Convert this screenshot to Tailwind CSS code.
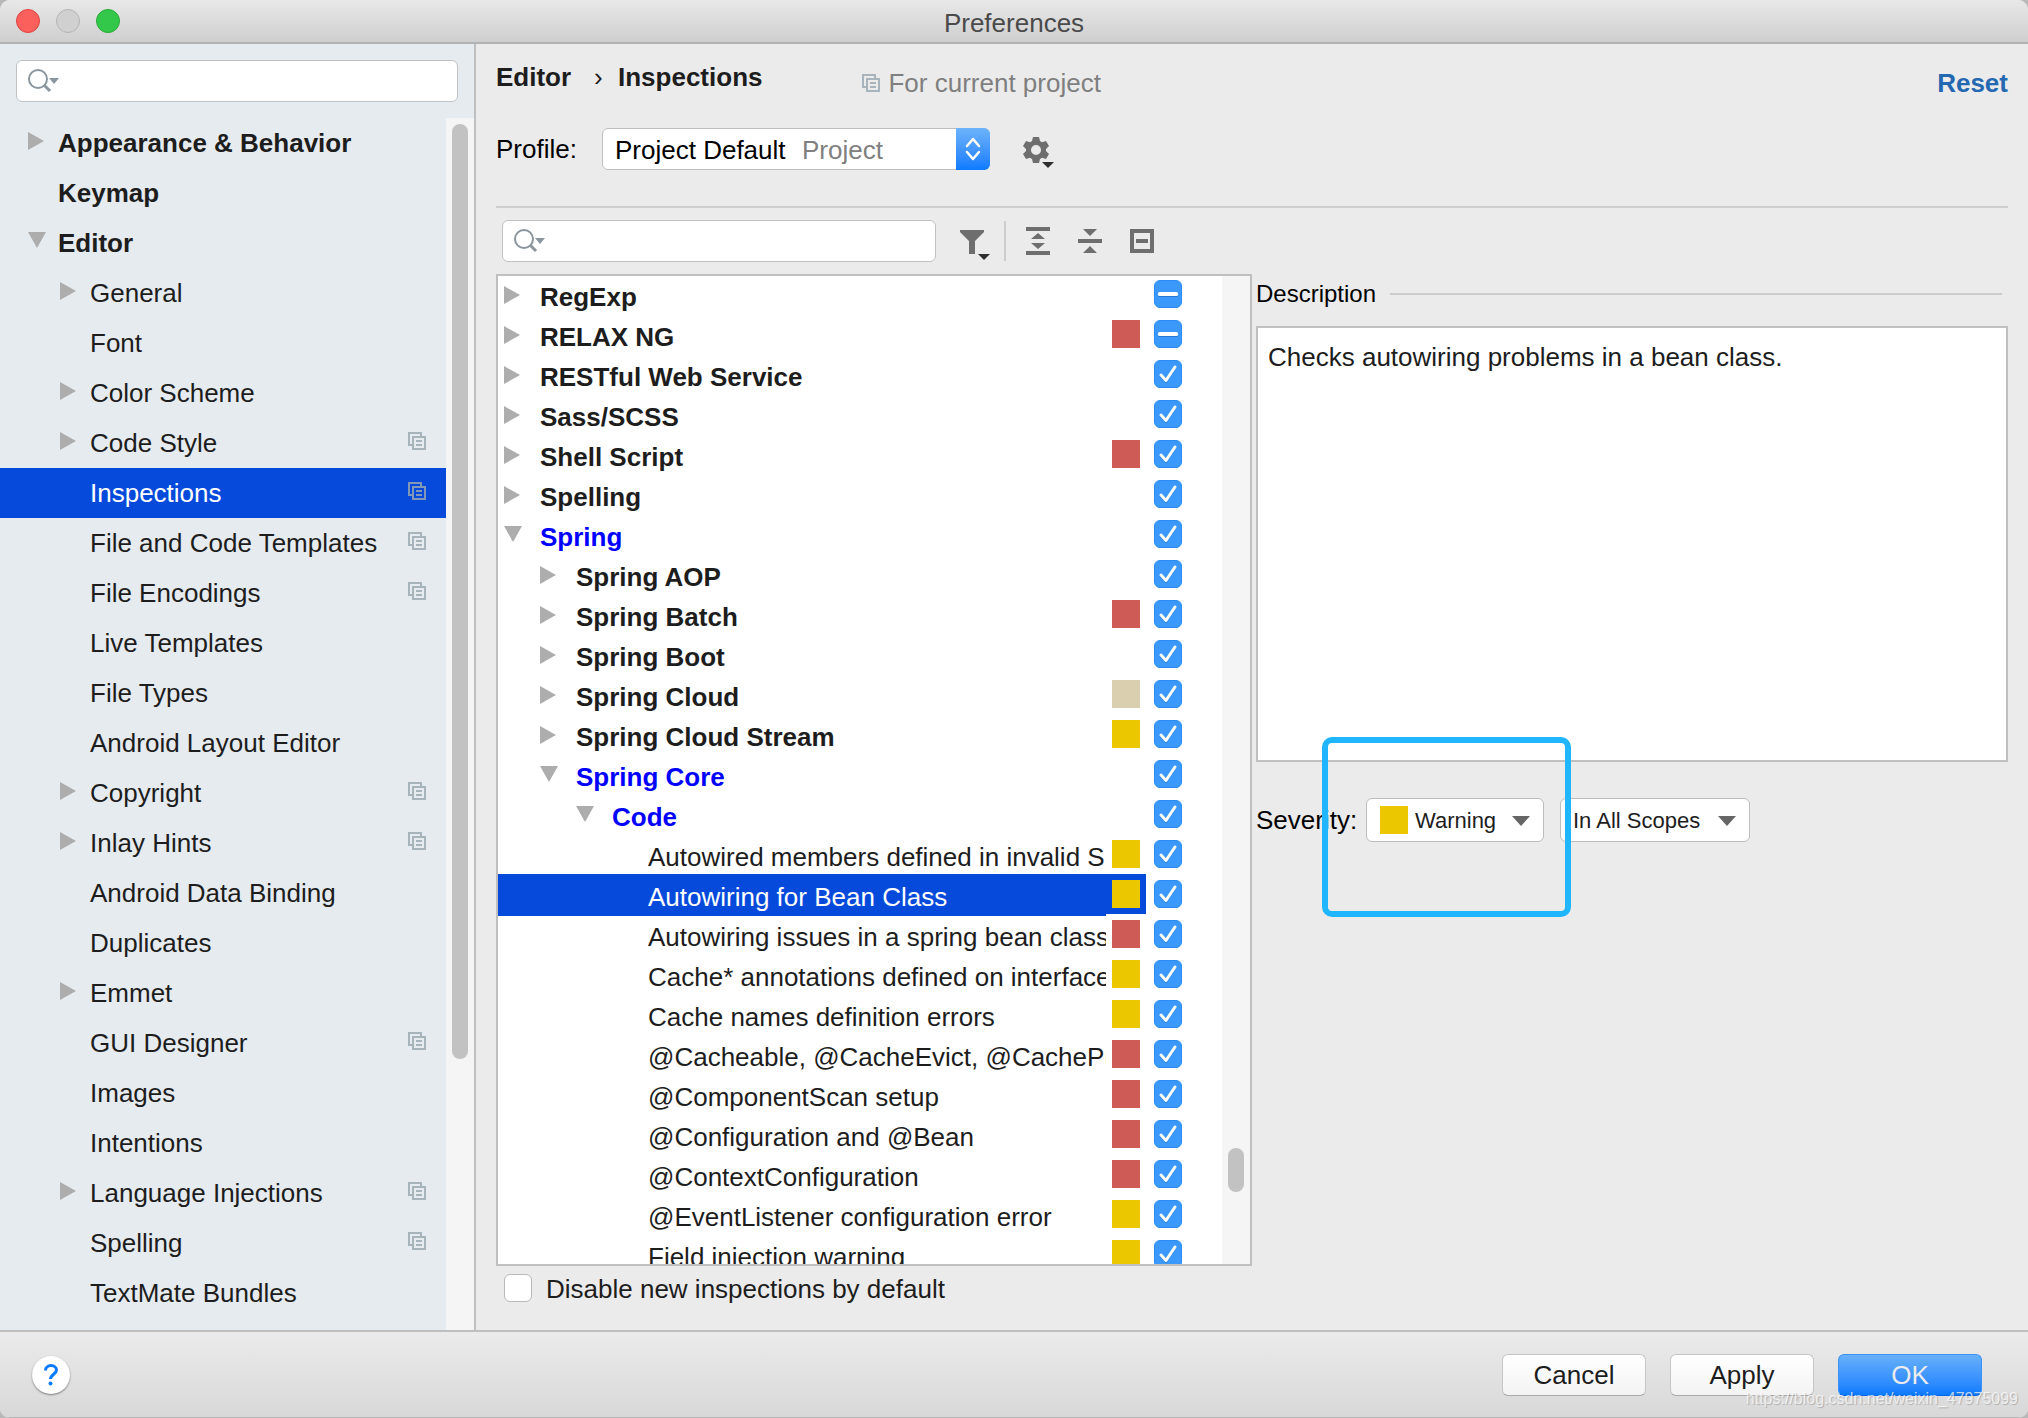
<!DOCTYPE html>
<html lang="en">
<head>
<meta charset="utf-8">
<title>Preferences</title>
<script src="https://cdn.jsdelivr.net/npm/@tailwindcss/browser@4"></script>
</head>
<body class="bg-[#b8b8b8] font-['Liberation_Sans',Arial,sans-serif] text-[26px] text-[#1d1d1d]">

<svg class="hidden" aria-hidden="true">
  <symbol id="copy" viewBox="0 0 18 18"><path d="M4 13H1V1H13V4M5 5H17V17H5ZM8 9H14M8 13H14" fill="none" stroke="currentColor" stroke-width="2"/></symbol>
  <symbol id="closed" viewBox="0 0 18 18"><path d="M0 0L16 9L0 18Z" fill="#adadad"/></symbol>
  <symbol id="open" viewBox="0 0 18 18"><path d="M0 0H18L9 16Z" fill="#adadad"/></symbol>
  <symbol id="search" viewBox="0 0 34 26"><circle cx="11" cy="11" r="9" fill="none" stroke="#8a959d" stroke-width="2"/><path d="M17 17L23 23" stroke="#8a959d" stroke-width="3"/><path d="M22 10H32L27 16Z" fill="#8a959d"/></symbol>
  <symbol id="tick" viewBox="0 0 28 28"><path d="M7 16L12 21.500L21 8" fill="none" stroke="#1b62b8" stroke-opacity=".35" stroke-width="3" stroke-linecap="round" stroke-linejoin="round"/><path d="M7 15L12 20.500L21 7" fill="none" stroke="#fff" stroke-width="3" stroke-linecap="round" stroke-linejoin="round"/></symbol>
  <symbol id="dash" viewBox="0 0 28 28"><rect x="4" y="13" width="20" height="4" rx="1.500" fill="#1b62b8" fill-opacity=".6"/><rect x="4" y="12" width="20" height="4" rx="1.500" fill="#fff"/></symbol>
</svg>

<div class="flex h-screen flex-col overflow-hidden rounded-[10px] bg-[#ebebeb]">

  <header class="flex h-11 shrink-0 items-center border-b-2 border-[#b1b1b1] bg-linear-to-b from-[#e8e8e8] to-[#cfcfcf] px-4">
    <div class="flex flex-1 gap-4">
      <button aria-label="Close" class="size-6 rounded-full border border-[#e0443e] bg-[#fc605c]"></button>
      <button aria-label="Minimize" class="size-6 rounded-full border border-[#b4b4b4] bg-[#d0d0d0]"></button>
      <button aria-label="Zoom" class="size-6 rounded-full border border-[#27aa35] bg-[#34c84a]"></button>
    </div>
    <h1 class="pt-1 leading-8 text-[#4a4a4a]">Preferences</h1>
    <div class="flex-1"></div>
  </header>

  <div class="flex min-h-0 flex-1">

    <aside class="flex w-[476px] shrink-0 flex-col border-r-2 border-[#bfbfbf] bg-[#e6ebef]">
      <div class="px-4 pt-4 pb-4">
        <label class="flex h-[42px] items-center rounded-md border border-[#bfc2c5] bg-white pl-2.5">
          <svg class="h-[26px] w-[34px] shrink-0"><use href="#search"/></svg>
          <input type="search" aria-label="Search settings" class="min-w-0 flex-1 bg-transparent outline-none">
        </label>
      </div>
      <div class="flex min-h-0 flex-1">
        <nav class="min-w-0 flex-1 overflow-hidden"><ul id="settings"></ul></nav>
        <div class="flex w-7 shrink-0 flex-col bg-[#f5f5f5] px-1.5 pt-1.5"><div class="flex-[935] rounded-full bg-[#c2c2c2]"></div><div class="flex-[271]"></div></div>
      </div>
    </aside>

    <main class="flex min-w-0 flex-1 flex-col px-5">
      <div class="flex h-[84px] shrink-0 items-start pt-4 leading-[34px]">
        <div class="flex font-bold"><span class="w-[98px]">Editor</span><span class="w-6 font-normal">›</span><span>Inspections</span></div>
        <div class="mt-1.5 ml-[100px] flex items-center gap-2 text-[#7f7f7f]">
          <svg class="size-[18px] text-[#a8b4bb]"><use href="#copy"/></svg>For current project
        </div>
        <a href="#" class="mt-1.5 ml-auto font-bold text-[#2568b2]">Reset</a>
      </div>

      <div class="flex h-[80px] shrink-0 items-start border-b-2 border-[#cdcdcd]">
        <label for="profile" class="w-[106px] leading-[42px] text-black">Profile:</label>
        <div class="relative h-[42px] w-[388px]">
          <select id="profile" class="h-full w-full appearance-none rounded-md border border-[#bfbfbf] bg-white pt-0.5 pl-3 text-black"><option>Project Default</option></select>
          <span class="pointer-events-none absolute top-0 left-[200px] leading-[44px] text-[#808080]">Project</span>
          <span class="pointer-events-none absolute top-0 right-0 grid h-full w-[34px] place-items-center rounded-r-md bg-linear-to-b from-[#6cb3fa] to-[#0a7aff]">
            <svg class="h-6 w-4" viewBox="0 0 16 24" fill="none" stroke="#fff" stroke-width="2.500" stroke-linecap="round" stroke-linejoin="round"><path d="M2 9L8 2L14 9M2 15L8 22L14 15"/></svg>
          </span>
        </div>
        <button aria-label="Profile actions" class="mt-2 ml-8">
          <svg class="h-8 w-8" viewBox="0 0 32 32" fill="#6e6e6e"><path fill-rule="evenodd" d="M11 1H17L18 5L20 6.200L24 5L27 10L24 13V15L27 18L24 23L20 21.800L18 23L17 27H11L10 23L8 21.800L4 23L1 18L4 15V13L1 10L4 5L8 6.200L10 5ZM14 9A5 5 0 1 0 14 19A5 5 0 1 0 14 9Z"/><path d="M20 26H32L26 32Z" fill="#2f2f2f"/></svg>
        </button>
      </div>

      <div class="flex h-[66px] shrink-0 items-center pl-1.5">
        <label class="flex h-[42px] w-[434px] items-center rounded-md border border-[#bfc2c5] bg-white pl-2.5">
          <svg class="h-[26px] w-[34px] shrink-0"><use href="#search"/></svg>
          <input type="search" aria-label="Search inspections" class="min-w-0 flex-1 bg-transparent outline-none">
        </label>
        <button aria-label="Filter" class="mt-2 ml-6"><svg class="h-8 w-[30px]" viewBox="0 0 30 32" fill="#6e6e6e"><path d="M0 1H24V3L15 12V25H9V12L0 3Z"/><path d="M18 25H30L24 31Z" fill="#2f2f2f"/></svg></button>
        <div class="ml-3.5 h-10 w-0.5 bg-[#cdcdcd]"></div>
        <button aria-label="Expand all" class="ml-5"><svg class="h-7 w-6" viewBox="0 0 24 28" fill="#6e6e6e"><path d="M0 0H24V4H0ZM0 24H24V28H0ZM5 12L12 6L19 12ZM5 16H19L12 22Z"/></svg></button>
        <button aria-label="Collapse all" class="ml-7"><svg class="h-6 w-6" viewBox="0 0 24 24" fill="#6e6e6e"><path d="M0 10H24V14H0ZM5 0H19L12 7ZM5 24L12 17L19 24Z"/></svg></button>
        <button aria-label="Reset to empty" class="ml-7"><svg class="h-6 w-6" viewBox="0 0 24 24" fill="#6e6e6e"><path fill-rule="evenodd" d="M0 0H24V24H0ZM4 4V20H20V4ZM6 10H18V14H6Z"/></svg></button>
      </div>

      <div class="flex min-h-0 flex-1">
        <section class="flex w-1/2 shrink-0 flex-col">
          <div class="flex min-h-0 flex-1 border-2 border-[#bfbfbf] bg-white">
            <div class="min-w-0 flex-1 overflow-hidden">
              <table class="-mt-0.5 w-full table-fixed border-collapse" aria-label="Inspections">
                <colgroup><col><col class="w-10"><col class="w-[76px]"></colgroup>
                <tbody id="inspections"></tbody>
              </table>
            </div>
            <div class="flex w-7 shrink-0 flex-col bg-[#f5f5f5] px-1.5">
              <div class="flex-[872]"></div><div class="h-11 rounded-full bg-[#c2c2c2]"></div><div class="flex-[72]"></div>
            </div>
          </div>
          <label class="flex h-16 items-start gap-3.5 pt-2 pl-2 leading-[30px]">
            <input type="checkbox" class="size-7 appearance-none rounded-md border border-[#b9b9b9] bg-white">Disable new inspections by default
          </label>
        </section>

        <section class="min-w-0 flex-1 pl-1">
          <h2 class="flex items-center gap-3.5 pr-1.5 text-2xl leading-10 text-black">Description<span class="h-0.5 flex-1 bg-[#cdcdcd]"></span></h2>
          <div class="mt-3 h-[436px] border-2 border-[#bfbfbf] bg-white px-2.5 pt-3"><p class="leading-[34px]">Checks autowiring problems in a bean class.</p></div>
          <div class="relative mt-9 flex h-11 items-center">
            <label for="severity" class="w-[110px] text-black">Severity:</label>
            <div class="relative h-full w-[178px]">
              <select id="severity" class="h-full w-full appearance-none rounded-md border border-[#bdbdbd] bg-white pl-12 text-[22px]"><option>Warning</option></select>
              <span class="pointer-events-none absolute top-2 left-3.5 size-7 bg-[#ebc700]"></span>
              <svg class="pointer-events-none absolute top-[18px] right-3.5 h-2.5 w-[18px]" viewBox="0 0 18 10"><path d="M0 0H18L9 10Z" fill="#666"/></svg>
            </div>
            <div class="relative ml-4 h-full w-[190px]">
              <select aria-label="Scope" class="h-full w-full appearance-none rounded-md border border-[#bdbdbd] bg-white pl-3 text-[22px]"><option>In All Scopes</option></select>
              <svg class="pointer-events-none absolute top-[18px] right-3.5 h-2.5 w-[18px]" viewBox="0 0 18 10"><path d="M0 0H18L9 10Z" fill="#666"/></svg>
            </div>
            <div class="pointer-events-none absolute -top-[61px] left-[66px] h-[180px] w-[249px] rounded-[10px] border-6 border-[#1fb5ff]"></div>
          </div>
        </section>
      </div>
    </main>
  </div>

  <footer class="relative flex h-[88px] shrink-0 items-start border-t-2 border-b border-t-[#bfbfbf] border-b-[#b5b5b5] bg-linear-to-b from-[#ebebeb] to-[#d8d8d8] pt-[22px] pr-[46px] pl-8">
    <button aria-label="Help" class="mt-0.5 grid size-[38px] place-items-center rounded-full bg-white shadow-[0_1px_2px_rgba(0,0,0,0.45)]">
      <svg class="h-[22px] w-[14px]" viewBox="0 0 14 22"><path d="M1.500 6.500C1.500 3.500 4 1.500 7 1.500S12.500 3.500 12.500 6C12.500 10 6.500 10.500 6.500 15" fill="none" stroke="#0a7aff" stroke-width="3"/><circle cx="6.500" cy="19.500" r="2" fill="#0a7aff"/></svg>
    </button>
    <div class="ml-auto flex gap-6">
      <button class="h-[42px] w-36 rounded-md border border-[#c6c6c6] border-b-[#a9a9a9] bg-linear-to-b from-white to-[#f3f3f3]">Cancel</button>
      <button class="h-[42px] w-36 rounded-md border border-[#c6c6c6] border-b-[#a9a9a9] bg-linear-to-b from-white to-[#f3f3f3]">Apply</button>
      <button class="h-[42px] w-36 rounded-md border border-[#3d93f5] border-b-[#0a66e8] bg-linear-to-b from-[#67b0fa] to-[#0a7aff] text-[#ececec]">OK</button>
    </div>
    <span class="pointer-events-none absolute right-2.5 bottom-2 text-base leading-5 text-white/70 [text-shadow:1px_1px_1px_rgba(0,0,0,0.2)]">https://blog.csdn.net/weixin_47975099</span>
  </footer>
</div>

<script>
// [label, level, arrow, project-level marker]
const settings = [
  ['Appearance & Behavior', 0, 'closed'], ['Keymap', 0, ''], ['Editor', 0, 'open'],
  ['General', 1, 'closed'], ['Font', 1, ''], ['Color Scheme', 1, 'closed'],
  ['Code Style', 1, 'closed', 1], ['Inspections', 1, '', 1], ['File and Code Templates', 1, '', 1],
  ['File Encodings', 1, '', 1], ['Live Templates', 1, ''], ['File Types', 1, ''],
  ['Android Layout Editor', 1, ''], ['Copyright', 1, 'closed', 1], ['Inlay Hints', 1, 'closed', 1],
  ['Android Data Binding', 1, ''], ['Duplicates', 1, ''], ['Emmet', 1, 'closed'],
  ['GUI Designer', 1, '', 1], ['Images', 1, ''], ['Intentions', 1, ''],
  ['Language Injections', 1, 'closed', 1], ['Spelling', 1, '', 1], ['TextMate Bundles', 1, '']
];
const esc = s => s.replace(/&/g, '&amp;');
const arrow = a => a ? `<svg class="mb-1 block size-[18px]"><use href="#${a}"/></svg>` : '';
document.getElementById('settings').innerHTML = settings.map(([t, l, a, p]) => {
  const on = t === 'Inspections';
  return `<li><a href="#" class="flex h-[50px] items-center pr-5 whitespace-nowrap ${l ? 'pl-[60px]' : 'pl-7 font-bold'} ${on ? 'bg-[#064adb] text-white' : ''}"><span class="w-[30px] shrink-0">${arrow(a)}</span><span class="flex-1">${esc(t)}</span>${p ? `<svg class="mb-1 size-[18px] ${on ? 'text-[#8296b8]' : 'text-[#a8b4bb]'}"><use href="#copy"/></svg>` : ''}</a></li>`;
}).join('');

// [label, depth, arrow, severity, style]
const inspections = [
  ['RegExp', 0, 'closed', '', 'b'], ['RELAX NG', 0, 'closed', 'r', 'b'], ['RESTful Web Service', 0, 'closed', '', 'b'],
  ['Sass/SCSS', 0, 'closed', '', 'b'], ['Shell Script', 0, 'closed', 'r', 'b'], ['Spelling', 0, 'closed', '', 'b'],
  ['Spring', 0, 'open', '', 'm'], ['Spring AOP', 1, 'closed', '', 'b'], ['Spring Batch', 1, 'closed', 'r', 'b'],
  ['Spring Boot', 1, 'closed', '', 'b'], ['Spring Cloud', 1, 'closed', 't', 'b'], ['Spring Cloud Stream', 1, 'closed', 'y', 'b'],
  ['Spring Core', 1, 'open', '', 'm'], ['Code', 2, 'open', '', 'm'],
  ['Autowired members defined in invalid Spring bean', 3, '', 'y', ''], ['Autowiring for Bean Class', 3, '', 'y', 's'],
  ['Autowiring issues in a spring bean class', 3, '', 'r', ''], ['Cache* annotations defined on interfaces', 3, '', 'y', ''],
  ['Cache names definition errors', 3, '', 'y', ''], ['@Cacheable, @CacheEvict, @CachePut', 3, '', 'r', ''],
  ['@ComponentScan setup', 3, '', 'r', ''], ['@Configuration and @Bean', 3, '', 'r', ''],
  ['@ContextConfiguration', 3, '', 'r', ''], ['@EventListener configuration error', 3, '', 'y', ''],
  ['Field injection warning', 3, '', 'y', '']
];
const indent = ['pl-1.5', 'pl-[42px]', 'pl-[78px]', 'pl-[114px]'];
const fill = { r: 'bg-[#cf5b56]', y: 'bg-[#ebc700]', t: 'bg-[#dacfae]' };
const look = { b: 'font-bold', m: 'font-bold text-[#0000ff]', s: 'bg-[#064adb] text-white shadow-[0_2px_0_#064adb]', '': '' };
document.getElementById('inspections').innerHTML = inspections.map(([t, d, a, c, k], i) =>
  `<tr class="h-10"><td class="p-0"><div class="flex h-10 items-center overflow-hidden pt-1.5 whitespace-nowrap ${indent[d]} ${look[k]}"><span class="w-9 shrink-0">${arrow(a)}</span><span>${t}</span></div></td>` +
  `<td class="p-0 pl-1.5 ${k === 's' ? 'bg-[#064adb]' : ''}">${c ? `<div class="size-7 ${fill[c]}"></div>` : ''}</td>` +
  `<td class="p-0 pl-2"><label class="grid size-7"><input type="checkbox" checked aria-label="${t}" class="col-start-1 row-start-1 size-7 appearance-none rounded-md border border-[#2b8bf5] bg-[#3b99fc]"><svg class="pointer-events-none col-start-1 row-start-1 size-7"><use href="#${i < 2 ? 'dash' : 'tick'}"/></svg></label></td></tr>`
).join('');
document.querySelectorAll('#inspections input').forEach((el, i) => { el.indeterminate = i < 2; });
</script>
</body>
</html>
